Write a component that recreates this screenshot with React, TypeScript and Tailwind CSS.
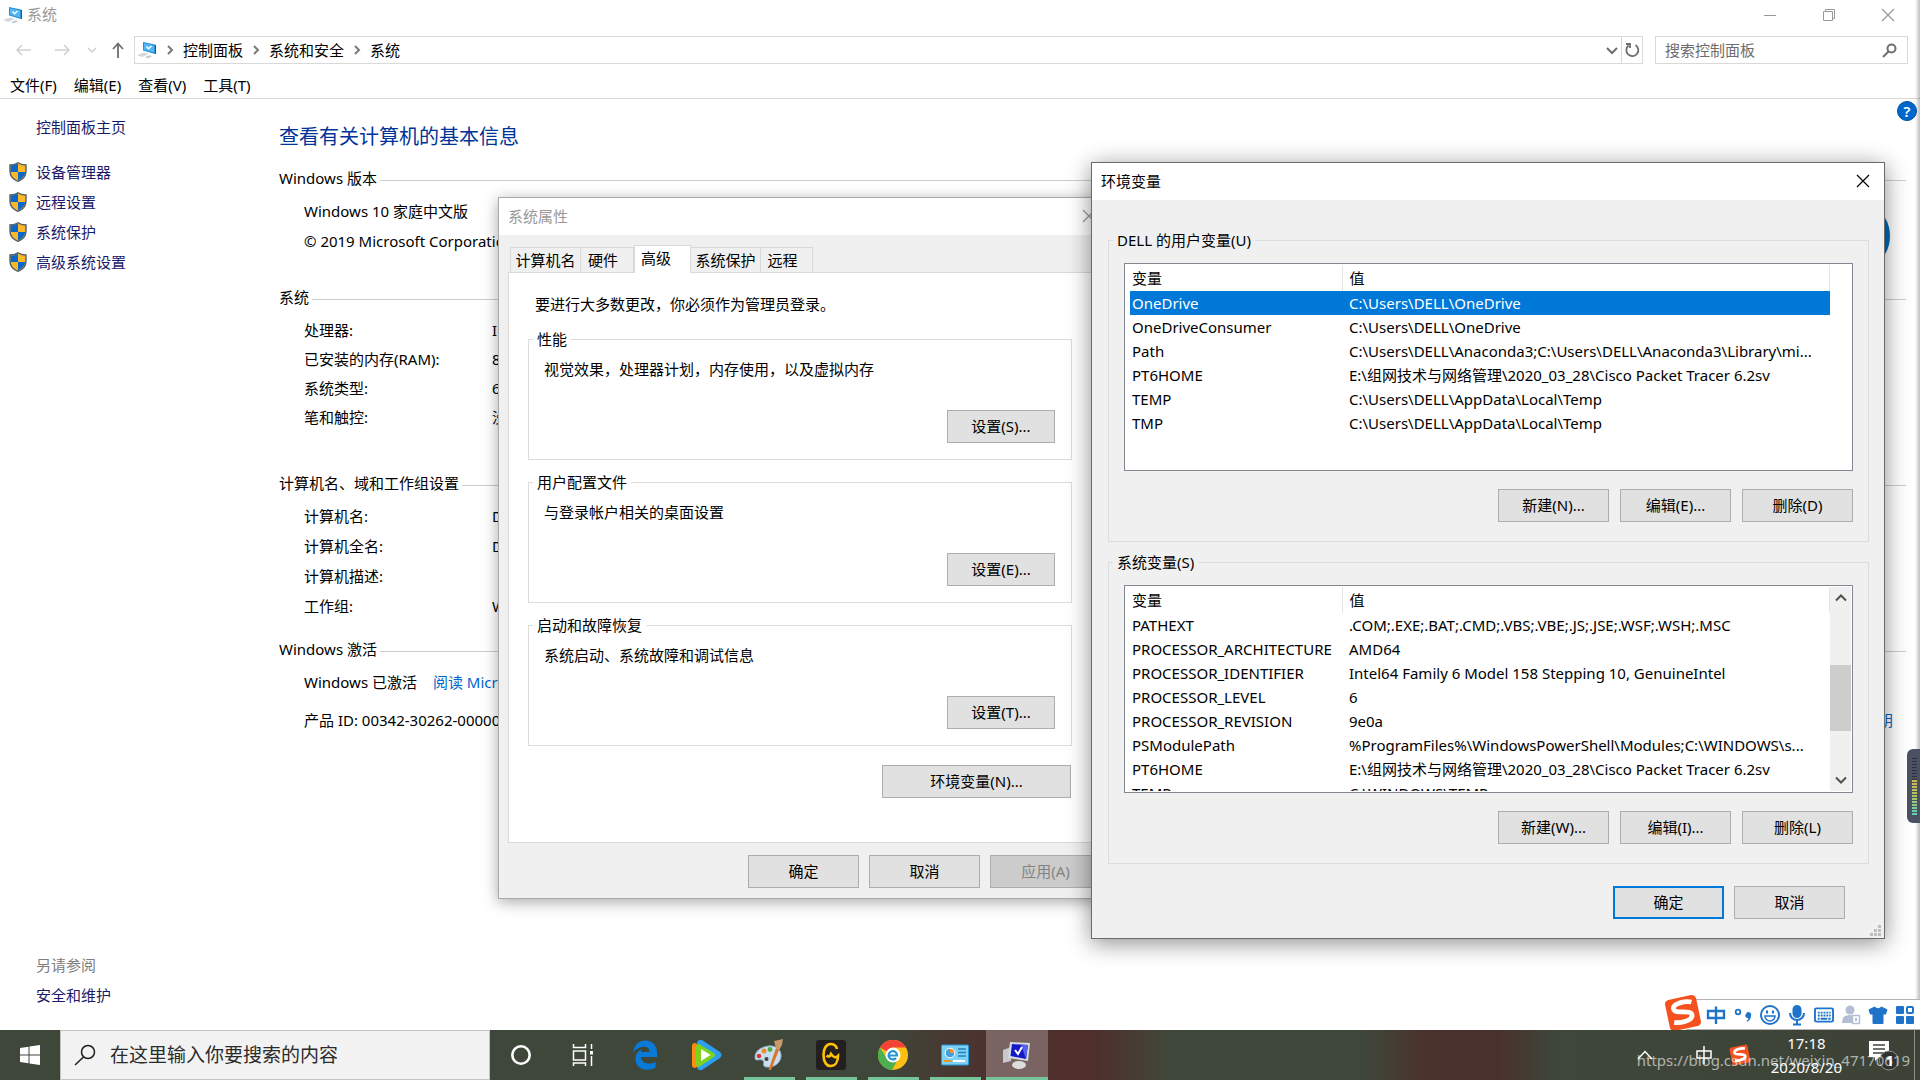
import { ReactNode } from "react";

interface IVariable {
  name: string;
  value: string;
}

interface IInfoRow {
  label: string;
  value: string;
}

const breadcrumbs = ["控制面板", "系统和安全", "系统"];
const menus = ["文件(F)", "编辑(E)", "查看(V)", "工具(T)"];
const sideLinks = ["设备管理器", "远程设置", "系统保护", "高级系统设置"];

const systemRows: IInfoRow[] = [
  { label: "处理器:", value: "Intel(R) Core(TM)" },
  { label: "已安装的内存(RAM):", value: "8.00 GB" },
  { label: "系统类型:", value: "64 位操作系统" },
  { label: "笔和触控:", value: "没有可用于此显示器的笔或触控输入" },
];

const computerRows: IInfoRow[] = [
  { label: "计算机名:", value: "DESKTOP" },
  { label: "计算机全名:", value: "DESKTOP" },
  { label: "计算机描述:", value: "" },
  { label: "工作组:", value: "WORKGROUP" },
];

const userVariables: IVariable[] = [
  { name: "OneDrive", value: "C:\\Users\\DELL\\OneDrive" },
  { name: "OneDriveConsumer", value: "C:\\Users\\DELL\\OneDrive" },
  {
    name: "Path",
    value: "C:\\Users\\DELL\\Anaconda3;C:\\Users\\DELL\\Anaconda3\\Library\\mi...",
  },
  {
    name: "PT6HOME",
    value: "E:\\组网技术与网络管理\\2020_03_28\\Cisco Packet Tracer 6.2sv",
  },
  { name: "TEMP", value: "C:\\Users\\DELL\\AppData\\Local\\Temp" },
  { name: "TMP", value: "C:\\Users\\DELL\\AppData\\Local\\Temp" },
];

const systemVariables: IVariable[] = [
  {
    name: "PATHEXT",
    value: ".COM;.EXE;.BAT;.CMD;.VBS;.VBE;.JS;.JSE;.WSF;.WSH;.MSC",
  },
  { name: "PROCESSOR_ARCHITECTURE", value: "AMD64" },
  {
    name: "PROCESSOR_IDENTIFIER",
    value: "Intel64 Family 6 Model 158 Stepping 10, GenuineIntel",
  },
  { name: "PROCESSOR_LEVEL", value: "6" },
  { name: "PROCESSOR_REVISION", value: "9e0a" },
  {
    name: "PSModulePath",
    value: "%ProgramFiles%\\WindowsPowerShell\\Modules;C:\\WINDOWS\\s...",
  },
  {
    name: "PT6HOME",
    value: "E:\\组网技术与网络管理\\2020_03_28\\Cisco Packet Tracer 6.2sv",
  },
  { name: "TEMP", value: "C:\\WINDOWS\\TEMP" },
];

const ComputerIcon = () => (
  <svg width="20" height="18" viewBox="0 0 20 18" className="shrink-0">
    <path d="M6 1 L18 3.5 V13 L6 9.5 Z" fill="#2b8fd6" />
    <path d="M7 2.3 L17 4.4 V11.5 L7 8.6 Z" fill="#4fb8f5" />
    <path d="M18 3.5 L19 4.3 V13 L18 13Z" fill="#47525c" />
    <path d="M9.5 5.5 L11.5 7.8 L14.5 5" stroke="#fff" strokeWidth="1.4" fill="none" />
    <path d="M0 14 L7 11.5 L12 13 L5 16 Z" fill="#d3d9de" />
    <path d="M8 16 L13 14.2 L15 15.2 L10.5 17.5 Z" fill="#c3cad0" />
  </svg>
);

const ShieldIcon = () => (
  <svg width="18" height="20" viewBox="0 0 18 20" className="shrink-0">
    <path
      d="M9 0.8 C11 2.4 14 3 17 3 V9 C17 14 13.5 17.5 9 19.3 C4.500 17.5 1 14 1 9 V3 C4 3 7 2.400 9 0.8Z"
      fill="#fdb827"
      stroke="#55606a"
      strokeWidth="1.4"
    />
    <path d="M9 1.6 V10 H1.7 V3.6 C4.500 3.5 7 2.9 9 1.600Z" fill="#0a66c8" />
    <path d="M9 10 H16.200 C15.700 14 12.700 16.800 9 18.500Z" fill="#0a66c8" />
  </svg>
);

const Chevron = ({ d, className }: { d: string; className?: string }) => (
  <svg width="12" height="12" viewBox="0 0 12 12" className={className}>
    <path d={d} fill="none" stroke="currentColor" strokeWidth="2" />
  </svg>
);

const CloseIcon = () => (
  <svg width="14" height="14" viewBox="0 0 14 14">
    <path d="M1 1 L13 13 M13 1 L1 13" stroke="currentColor" strokeWidth="1.2" />
  </svg>
);

const SogouIcon = ({ size }: { size: number }) => (
  <svg width={size} height={size} viewBox="0 0 36 36" className="shrink-0">
    <g transform="rotate(-12 18 18)">
      <rect x="3" y="3" width="30" height="30" rx="4" fill="#f4511e" />
      <path
        d="M28 9.500 C23 7 10 7 10 12.500 C10 18 26 16 26 21.500 C26 27 13 27 8 25"
        fill="none"
        stroke="#fff"
        strokeWidth="4.500"
      />
    </g>
  </svg>
);

const Button = ({
  children,
  className = "w-[111px]",
  primary = false,
  disabled = false,
}: {
  children: ReactNode;
  className?: string;
  primary?: boolean;
  disabled?: boolean;
}) => (
  <button
    type="button"
    disabled={disabled}
    className={`h-[33px] shrink-0 pb-[2px] leading-5 ${className} ${
      primary ? "border-2 border-[#0078d7]" : "border border-[#adadad]"
    } ${disabled ? "bg-[#cccccc] text-[#838383]" : "bg-[#e1e1e1]"}`}
  >
    {children}
  </button>
);

const SectionTitle = ({ children }: { children: ReactNode }) => (
  <h2 className="flex items-center gap-[3px] leading-5">
    {children}
    <span className="mt-1 h-px flex-1 bg-[#cccccc]" />
  </h2>
);

const InfoRows = ({ rows, className }: { rows: IInfoRow[]; className: string }) => (
  <dl className={`pl-[25px] ${className}`}>
    {rows.map((row) => (
      <div key={row.label} className="flex">
        <dt className="w-[188px] shrink-0">{row.label}</dt>
        <dd className="whitespace-nowrap">{row.value}</dd>
      </div>
    ))}
  </dl>
);

const SettingsGroup = ({
  title,
  text,
  button,
}: {
  title: string;
  text: string;
  button: string;
}) => (
  <fieldset className="border border-[#dcdcdc] px-1 pb-4">
    <legend className="px-1 leading-5">{title}</legend>
    <p className="mt-[10px] pl-[11px] leading-5">{text}</p>
    <div className="mt-[31px] flex justify-end pr-3">
      <Button className="w-[108px]">{button}</Button>
    </div>
  </fieldset>
);

const VariableGroup = ({
  title,
  variables,
  buttons,
  selected,
  scrollable = false,
}: {
  title: string;
  variables: IVariable[];
  buttons: string[];
  selected?: string;
  scrollable?: boolean;
}) => (
  <fieldset className="border border-[#dcdcdc] px-1 pb-[19px]">
    <legend className="px-1 leading-5">{title}</legend>
    <div className="mt-[13px] px-[11px]">
      <div className="flex h-[208px] border border-[#828790] bg-white p-px">
        <div className="flex-1 overflow-hidden pl-1">
          <table className="w-full table-fixed border-collapse text-left">
            <thead>
              <tr className="h-[26px]">
                <th className="w-[212px] border-r border-[#e5e5e5] pl-[2px] font-normal">
                  变量
                </th>
                <th className="border-r border-[#e5e5e5] pl-[7px] font-normal">值</th>
              </tr>
            </thead>
            <tbody>
              {variables.map((item) => (
                <tr
                  key={item.name}
                  className={`h-6 leading-5 whitespace-nowrap ${
                    item.name === selected && "bg-[#0078d7] text-white"
                  }`}
                >
                  <td className="pl-[2px]">{item.name}</td>
                  <td className="pl-[7px]">{item.value}</td>
                </tr>
              ))}
            </tbody>
          </table>
        </div>
        {scrollable ? (
          <div className="flex w-[21px] flex-col items-center bg-[#f0f0f0] py-[5px] text-[#505050]">
            <Chevron d="M1 8.500 L6 3.500 L11 8.500" />
            <div className="mt-[61px] mb-auto h-[66px] w-full bg-[#cdcdcd]" />
            <Chevron d="M1 3.500 L6 8.500 L11 3.500" />
          </div>
        ) : (
          <div className="w-[21px]" />
        )}
      </div>
      <div className="mt-[18px] flex justify-end gap-[11px]">
        {buttons.map((label) => (
          <Button key={label}>{label}</Button>
        ))}
      </div>
    </div>
  </fieldset>
);

const SystemProperties = () => (
  <section className="absolute top-[197px] left-[498px] w-[613px] border border-[#aaaaaa] bg-[#f0f0f0] shadow-[0_3px_14px_rgba(0,0,0,0.35)]">
    <header className="flex h-[37px] items-center justify-between bg-white pr-[14px] pb-px pl-[9px] text-[#999999]">
      <h2>系统属性</h2>
      <button type="button" aria-label="关闭">
        <CloseIcon />
      </button>
    </header>
    <div className="px-[9px] py-[10px]">
      <div role="tablist" className="flex h-[27px] items-end pl-[2px] leading-5">
        <button role="tab" className="h-[25px] w-[71px] border border-b-0 border-[#d9d9d9]">
          计算机名
        </button>
        <button role="tab" className="h-[25px] w-[53px] border border-b-0 border-l-0 border-[#d9d9d9] pr-2">
          硬件
        </button>
        <button
          role="tab"
          aria-selected
          className="relative -mb-px h-7 w-[57px] border border-b-0 border-[#d9d9d9] bg-white pr-[13px] pb-1"
        >
          高级
        </button>
        <button role="tab" className="h-[25px] w-[70px] border border-b-0 border-l-0 border-[#d9d9d9]">
          系统保护
        </button>
        <button role="tab" className="h-[25px] w-[52px] border border-b-0 border-l-0 border-[#d9d9d9] pr-2">
          远程
        </button>
      </div>
      <div className="border border-[#d9d9d9] bg-white pt-[21px] pr-[28px] pb-11 pl-[19px]">
        <p className="mb-[15px] pl-[7px] leading-5">要进行大多数更改，你必须作为管理员登录。</p>
        <div className="flex flex-col gap-3">
          <SettingsGroup
            title="性能"
            text="视觉效果，处理器计划，内存使用，以及虚拟内存"
            button="设置(S)..."
          />
          <SettingsGroup title="用户配置文件" text="与登录帐户相关的桌面设置" button="设置(E)..." />
          <SettingsGroup
            title="启动和故障恢复"
            text="系统启动、系统故障和调试信息"
            button="设置(T)..."
          />
        </div>
        <div className="mt-[19px] flex justify-end pr-px">
          <Button className="w-[189px]">环境变量(N)...</Button>
        </div>
      </div>
      <div className="mt-3 flex justify-end gap-[10px]">
        <Button>确定</Button>
        <Button>取消</Button>
        <Button disabled>应用(A)</Button>
      </div>
    </div>
  </section>
);

const EnvironmentVariables = () => (
  <section className="absolute top-[162px] left-[1091px] w-[794px] border border-[#6b6b6b] bg-[#f0f0f0] shadow-[0_4px_22px_rgba(0,0,0,0.45)]">
    <header className="flex h-[37px] items-center justify-between bg-white pr-[14px] pb-px pl-[9px]">
      <h2>环境变量</h2>
      <button type="button" aria-label="关闭">
        <CloseIcon />
      </button>
    </header>
    <div className="flex flex-col gap-[10px] pt-[30px] pr-[15px] pl-4">
      <VariableGroup
        title="DELL 的用户变量(U)"
        variables={userVariables}
        buttons={["新建(N)...", "编辑(E)...", "删除(D)"]}
        selected="OneDrive"
      />
      <VariableGroup
        title="系统变量(S)"
        variables={systemVariables}
        buttons={["新建(W)...", "编辑(I)...", "删除(L)"]}
        scrollable
      />
    </div>
    <div className="mt-[22px] flex justify-end gap-[10px] pr-[39px] pb-[19px]">
      <Button primary>确定</Button>
      <Button>取消</Button>
    </div>
    <svg width="12" height="12" viewBox="0 0 12 12" className="absolute right-[2px] bottom-px">
      <path
        d="M8 0h3v3h-3z M4 4h3v3h-3z M8 4h3v3h-3z M0 8h3v3h-3z M4 8h3v3h-3z M8 8h3v3h-3z"
        fill="#bfbfbf"
      />
    </svg>
  </section>
);

const Explorer = () => (
  <>
    <header className="flex h-[30px] items-center pb-px pl-[3px] text-[#999999]">
      <ComputerIcon />
      <h1 className="pl-1">系统</h1>
      <div className="ml-auto flex items-center gap-[45px] pr-[25px]">
        <button type="button" aria-label="最小化">
          <svg width="14" height="14" viewBox="0 0 14 14">
            <path d="M1 7.500 H13" stroke="currentColor" />
          </svg>
        </button>
        <button type="button" aria-label="还原">
          <svg width="14" height="14" viewBox="0 0 14 14" fill="none" stroke="currentColor">
            <path d="M1.500 3.500 H10.500 V12.500 H1.500 Z M3.500 3.500 V1.500 H12.500 V10.500 H10.500" />
          </svg>
        </button>
        <button type="button" aria-label="关闭">
          <CloseIcon />
        </button>
      </div>
    </header>
    <nav className="flex h-10 items-center pr-3 pl-4">
      <div className="flex w-[118px] items-center text-[#d0d0d0]">
        <svg width="16" height="12" viewBox="0 0 16 12" fill="none" stroke="currentColor" strokeWidth="1.5">
          <path d="M6 1 L1 6 L6 11 M1 6 H15" />
        </svg>
        <svg width="16" height="12" viewBox="0 0 16 12" fill="none" stroke="currentColor" strokeWidth="1.5" className="ml-[22px]">
          <path d="M10 1 L15 6 L10 11 M15 6 H1" />
        </svg>
        <svg width="10" height="8" viewBox="0 0 10 8" fill="none" stroke="currentColor" strokeWidth="1.5" className="ml-[17px]">
          <path d="M1 2 L5 6 L9 2" />
        </svg>
        <svg width="14" height="16" viewBox="0 0 14 16" fill="none" stroke="#6e6e6e" strokeWidth="1.800" className="ml-[14px]">
          <path d="M2 7 L7 1.500 L12 7 M7 1.500 V16" />
        </svg>
      </div>
      <div className="flex h-7 flex-1 items-center border border-[#d9d9d9] pl-[2px]">
        <ComputerIcon />
        {breadcrumbs.map((crumb) => (
          <span key={crumb} className="flex items-center">
            <Chevron d="M4 2 L8 6 L4 10" className="mx-[7px] text-[#7a7a7a]" />
            <a href="#">{crumb}</a>
          </span>
        ))}
        <Chevron d="M1 4 L6 9 L11 4" className="mr-[3px] ml-auto text-[#6e6e6e]" />
        <button
          type="button"
          aria-label="刷新"
          className="flex h-full w-[21px] items-center justify-center border-l border-[#d9d9d9] text-[#6e6e6e]"
        >
          <svg width="15" height="16" viewBox="0 0 15 16" fill="none" stroke="currentColor" strokeWidth="1.800">
            <path d="M10.500 3 A6 6 0 1 1 3.500 3.500 M1 2 H5 V6" />
          </svg>
        </button>
      </div>
      <label className="ml-3 flex h-7 w-[253px] items-center border border-[#d9d9d9] pr-[10px] pl-[9px]">
        <input
          type="text"
          aria-label="搜索控制面板"
          placeholder="搜索控制面板"
          className="min-w-0 flex-1 outline-none placeholder:text-[#6d6d6d]"
        />
        <svg width="15" height="15" viewBox="0 0 15 15" fill="none" stroke="#6e6e6e" strokeWidth="2">
          <circle cx="9.500" cy="5.500" r="4" />
          <path d="M6.500 8.500 L1 14" />
        </svg>
      </label>
    </nav>
    <div className="flex h-[29px] items-center gap-[17px] border-b border-[#d9d9d9] pt-px pl-[10px]">
      {menus.map((menu) => (
        <button key={menu} type="button" className="leading-5">
          {menu}
        </button>
      ))}
    </div>
    <div className="flex min-h-0 flex-1">
      <aside className="flex w-[279px] shrink-0 flex-col pt-[18px] pb-[25px] pl-9 leading-5 text-[#1a1a68]">
        <a href="#">控制面板主页</a>
        <ul className="mt-5 -ml-[27px]">
          {sideLinks.map((link) => (
            <li key={link}>
              <a href="#" className="flex h-[30px] items-center gap-[9px]">
                <ShieldIcon />
                {link}
              </a>
            </li>
          ))}
        </ul>
        <p className="mt-auto text-[#808080]">另请参阅</p>
        <a href="#" className="mt-[10px]">
          安全和维护
        </a>
      </aside>
      <main className="relative min-w-0 flex-1 pt-6 pr-[14px]">
        <h1 className="mb-[17px] text-[20px] leading-7 text-[#003399]">查看有关计算机的基本信息</h1>
        <SectionTitle>Windows 版本</SectionTitle>
        <div className="mt-2 pl-[25px] leading-[30px]">
          <p>Windows 10 家庭中文版</p>
          <p>© 2019 Microsoft Corporation。保留所有权利。</p>
        </div>
        <div className="mt-[31px]">
          <SectionTitle>系统</SectionTitle>
          <InfoRows rows={systemRows} className="mt-[9px] leading-[29px]" />
        </div>
        <div className="mt-[41px]">
          <SectionTitle>计算机名、域和工作组设置</SectionTitle>
          <InfoRows rows={computerRows} className="mt-2 leading-[30px]" />
        </div>
        <div className="mt-[18px]">
          <SectionTitle>Windows 激活</SectionTitle>
          <div className="mt-[13px] flex gap-4 pl-[25px] leading-5">
            <span>Windows 已激活</span>
            <a href="#" className="text-[#0066cc]">
              阅读 Microsoft 软件许可条款
            </a>
          </div>
          <div className="mt-[18px] flex justify-between pr-[13px] pl-[25px] leading-5">
            <span>产品 ID: 00342-30262-00000-AAOEM</span>
            <a href="#" className="text-[#0066cc]">
              更改产品密钥
            </a>
          </div>
        </div>
        <div className="absolute top-[112px] right-[30px] h-[50px] w-8 rounded-[50%] border-[6px] border-[#006db8]" />
        <button
          type="button"
          aria-label="帮助"
          className="absolute top-[2px] right-[3px] h-5 w-5 rounded-full border border-[#004e9c] bg-[#0067cc] leading-4 font-semibold text-white"
        >
          ?
        </button>
      </main>
    </div>
  </>
);

// Floating input method toolbar
const ImeBar = () => (
  <div className="absolute right-0 bottom-0 flex h-[31px] items-center text-[#1f74c9]">
    <div className="z-10 -mt-1">
      <SogouIcon size={38} />
    </div>
    <div className="-ml-4 flex h-[31px] items-center gap-[7px] border-y border-[#b4b4b4] bg-white pt-px pr-[5px] pl-5">
      <svg width="20" height="20" viewBox="0 0 20 20" fill="none" stroke="currentColor" strokeWidth="2.400">
        <path d="M2 6 H18 V13 H2 Z M10 1.500 V19" />
      </svg>
      <svg width="20" height="20" viewBox="0 0 20 20">
        <circle cx="5" cy="7" r="2.300" fill="none" stroke="currentColor" strokeWidth="1.800" />
        <path d="M13 9 a2.600 2.600 0 0 1 5 1.500 c0 3-1.500 5-4 6.500 l-.5-1 c1.500-1 1.800-2 1.800-3 a2.400 2.400 0 0 1-2.300-4z" fill="currentColor" />
      </svg>
      <svg width="20" height="20" viewBox="1 1 20 20" fill="none" stroke="currentColor" strokeWidth="2">
        <circle cx="11" cy="11" r="9" />
        <path d="M6 12 a5 5 0 0 0 10 0z" strokeWidth="1.500" />
        <path d="M8 6.500 V9.500 M14 6.500 V9.500" />
      </svg>
      <svg width="20" height="22" viewBox="0 0 20 22" fill="none" stroke="currentColor" strokeWidth="2">
        <rect x="6.500" y="2" width="7" height="11" rx="3.500" fill="currentColor" />
        <path d="M3 9 a7 7 0 0 0 14 0 M10 16 V20 M6 20.500 H14" />
      </svg>
      <svg width="20" height="20" viewBox="0 0 21 20">
        <rect x="1" y="3" width="19" height="14" rx="1.500" fill="none" stroke="currentColor" strokeWidth="2" />
        <path d="M4 7.500 H17.500 M4 10.500 H17.500" stroke="currentColor" strokeWidth="2" strokeDasharray="2 1" />
        <path d="M4 14 H6 M7 14 H14 M15 14 H17.500" stroke="currentColor" strokeWidth="2" />
      </svg>
      <svg width="20" height="20" viewBox="0 0 20 20" fill="#b4bfd6">
        <circle cx="9" cy="5" r="4.500" />
        <path d="M1 18 c0-6 3-8 8-8 s8 2 8 8z" />
        <path d="M11.500 10.500 H18.500 V18.500 H11.500 Z" fill="#fff" stroke="#b4bfd6" strokeWidth="1.500" />
        <path d="M14 13 h2 v3 h-2z" />
      </svg>
      <svg width="20" height="20" viewBox="0 0 20 20" fill="currentColor">
        <path d="M6.500 1.500 Q10 5 13.500 1.500 L19.500 4.500 L18 9.500 H15.500 V18 Q15.500 19 14.500 19 H5.500 Q4.500 19 4.500 18 V9.500 H2 L0.500 4.500 Z" />
      </svg>
      <svg width="20" height="20" viewBox="0 0 20 20" fill="currentColor">
        <rect x="1" y="1" width="8" height="8" rx="1" />
        <rect x="12" y="2" width="6" height="6" rx="1" fill="none" stroke="currentColor" strokeWidth="2" />
        <rect x="1" y="11" width="8" height="8" rx="1" />
        <rect x="11" y="11" width="8" height="8" rx="1" />
      </svg>
    </div>
  </div>
);

const TaskButton = ({
  label,
  open = false,
  active = false,
  children,
}: {
  label: string;
  open?: boolean;
  active?: boolean;
  children: ReactNode;
}) => (
  <button
    type="button"
    aria-label={label}
    className={`flex h-full w-[62px] items-center justify-center border-b-[3px] pt-[2px] ${
      active ? "border-[#76c49a] bg-white/25" : "border-transparent"
    } ${open && "relative"}`}
  >
    {children}
    {open && <span className="absolute -bottom-[3px] left-[6px] h-[3px] w-[51px] bg-[#76c49a]" />}
  </button>
);

const Taskbar = () => (
  <footer className="relative flex h-[50px] shrink-0 items-center bg-[linear-gradient(90deg,#3f463a_0%,#3f463a_46%,#4e302d_52%,#4e2f2c_57%,#40483b_61%,#3f473a_71%,#4a332d_74%,#49322d_78%,#3f463a_81%,#3c4336_100%)]">
    <button type="button" aria-label="开始" className="flex w-[60px] justify-center">
      <svg width="20" height="20" viewBox="0 0 20 20" fill="#fff">
        <path d="M0 3 L8.500 1.700 V9.500 H0Z M9.500 1.500 L20 0 V9.500 H9.500Z M0 10.500 H8.500 V18.300 L0 17Z M9.500 10.500 H20 V20 L9.500 18.500Z" />
      </svg>
    </button>
    <label className="flex h-full w-[430px] items-center border border-[#c3c3c3] bg-[#f2f2f2] pl-[13px]">
      <svg width="22" height="22" viewBox="0 0 22 22" fill="none" stroke="#1f1f1f" strokeWidth="1.500">
        <circle cx="14" cy="8" r="6.500" />
        <path d="M9.500 13 L1 21" />
      </svg>
      <input
        type="text"
        aria-label="搜索"
        placeholder="在这里输入你要搜索的内容"
        className="ml-[14px] flex-1 text-[19px] outline-none placeholder:text-[#2b2b2b]"
      />
    </label>
    <TaskButton label="Cortana">
      <svg width="22" height="22" viewBox="0 0 22 22" fill="none" stroke="#fff" strokeWidth="2.600">
        <circle cx="11" cy="11" r="8.700" />
      </svg>
    </TaskButton>
    <TaskButton label="任务视图">
      <svg width="22" height="22" viewBox="0 0 22 22" fill="none" stroke="#fff" strokeWidth="1.500">
        <path d="M1.500 7 H13.500 V16 H1.500Z M1.500 0 V3.500 H13.500 V0 M1.500 22 V19 H13.500 V22 M19.500 0 V5 M19.500 12 V22" />
        <path d="M18 7 H21 V10.500 H18Z" fill="#fff" stroke="none" />
      </svg>
    </TaskButton>
    <TaskButton label="Microsoft Edge">
      <svg width="26" height="30" viewBox="0 0 26 30" fill="#0a7ad8">
        <path d="M1 13 C2 5 7 0.500 13.500 0.500 C21 0.500 25 6 25 13 V17 H9 C9.300 21.500 13 23.500 17 23.500 C19.500 23.500 22 22.700 23.500 21.700 V27.500 C21 29 18 29.700 15 29.700 C8 29.700 3.500 25.500 3.500 19 C3.500 14.500 6 11 10 9 C9.300 10 9 11 9 12 H17.500 C17.500 8.500 15.500 6.800 12 6.800 C7.500 6.800 3 9.500 1 13Z" />
      </svg>
    </TaskButton>
    <TaskButton label="腾讯视频">
      <svg width="30" height="32" viewBox="0 0 30 32">
        <path d="M5 3 Q7 0 10 1 L28 13 Q31 16 28 19 L10 31 Q7 32 5 29Z" fill="#2d9ff2" />
        <path d="M0 7 Q0 4 3 4 L12 9 V24 L3 29 Q0 29 0 26Z" fill="#ff8d12" />
        <path d="M4 7 L7 5 L22 14 Q24 16 22 18 L7 28 L4 26Z" fill="#7ed321" />
        <path d="M9 10 L18.500 16 L9 22Z" fill="#fff" />
      </svg>
    </TaskButton>
    <TaskButton label="画图" open>
      <svg width="30" height="32" viewBox="0 0 30 32">
        <path d="M14 7 C22 6 28 11 27 18 C26 25 19 29 12 28 C7 27.500 12 22 8 21 C4 20 1 23 1 18 C1 12 7 8 14 7Z" fill="#c9dff0" stroke="#88a9c4" />
        <circle cx="5" cy="17" r="2.300" fill="#d9362f" />
        <circle cx="10" cy="12" r="2.500" fill="#f08b32" />
        <circle cx="16" cy="10.500" r="2.400" fill="#51ad43" />
        <circle cx="12.500" cy="20" r="2" fill="#3f463a" />
        <path d="M22 9 L25 11 L17 31 L14.500 31 Z" fill="#d8772b" />
        <path d="M20 2 L25 1 L29 0 L28 6 L25 11 L22 9Z" fill="#c99b6b" />
      </svg>
    </TaskButton>
    <TaskButton label="启动器" open>
      <svg width="30" height="30" viewBox="0 0 30 30">
        <rect width="30" height="30" rx="3" fill="#231f20" />
        <path d="M21 9 C20 5 17 4 14.500 4 C10 4 7.500 9 7.500 15 C7.500 21 10 26 14.500 26 C19 26 22 22 22 16 C20 18 18 18 15 14 C14 17 12 17 10.500 15.500" fill="none" stroke="#ffc107" strokeWidth="2.600" />
      </svg>
    </TaskButton>
    <TaskButton label="Chrome" open>
      <svg width="30" height="30" viewBox="0 0 30 30">
        <circle cx="15" cy="15" r="15" fill="#fbc013" />
        <path d="M15 15 L2 7.500 A15 15 0 0 1 28 7.500 H15Z" fill="#f44336" />
        <path d="M2 7.500 A15 15 0 0 0 14 30 L19.500 20 L15 15 L8.500 18Z" fill="#4caf50" />
        <circle cx="15" cy="15" r="7.500" fill="#fff" />
        <path d="M11 15.500 H19 A4.200 4.200 0 1 0 18 18" fill="none" stroke="#2196d3" strokeWidth="2.200" />
      </svg>
    </TaskButton>
    <TaskButton label="控制面板" open>
      <svg width="28" height="22" viewBox="0 0 28 22">
        <rect x="0.500" y="1" width="27" height="20" rx="1" fill="#7dd1f5" stroke="#2597d4" />
        <circle cx="9" cy="9" r="4.800" fill="#3f9fe0" />
        <path d="M9 9 V4.200 A4.800 4.800 0 0 1 13.800 9Z" fill="#f0932b" />
        <circle cx="9" cy="9" r="4.800" fill="none" stroke="#fff" />
        <path d="M17 5 H25 M17 8.500 H25 M17 12 H25" stroke="#2382b8" strokeWidth="1.600" />
        <path d="M3 17 H11" stroke="#f0932b" strokeWidth="2" />
        <path d="M12 17 H24" stroke="#fff" strokeWidth="2" />
      </svg>
    </TaskButton>
    <TaskButton label="系统" active>
      <svg width="30" height="30" viewBox="0 0 30 30">
        <path d="M1 10 L9 7 V21 L1 23Z" fill="#c6c9cd" />
        <path d="M8 2 L28 3 L26 21 L6 18Z" fill="#d7dadf" />
        <path d="M10 4 L26 5 L24 19 L8.500 16Z" fill="#1418c8" />
        <path d="M19 4.600 L26 5 L24 19Z" fill="#5663e8" />
        <path d="M13 10 L16 14 L20 7" fill="none" stroke="#fff" strokeWidth="2" />
        <ellipse cx="17" cy="25" rx="7" ry="4" fill="#dcdcdc" />
      </svg>
    </TaskButton>
    <div className="ml-auto flex h-full items-center text-white">
      <svg width="16" height="10" viewBox="0 0 16 10" fill="none" stroke="#fff" strokeWidth="1.500" className="mr-[43px]">
        <path d="M1 9 L8 1.500 L15 9" />
      </svg>
      <svg width="16" height="18" viewBox="0 0 16 18" fill="none" stroke="#fff" strokeWidth="1.500" className="mr-[17px]">
        <path d="M1 5 H15 V12 H1Z M8 0 V18" />
      </svg>
      <SogouIcon size={22} />
      <div className="mr-[27px] ml-5 text-center leading-6">
        <div>17:18</div>
        <div>2020/8/20</div>
      </div>
      <button type="button" aria-label="通知" className="relative mr-[14px]">
        <svg width="31" height="32" viewBox="0 0 31 32">
          <path d="M0 2 H20 V18 H10 L6 22 V18 H0Z" fill="#fff" />
          <path d="M4 6 H16 M4 10 H16 M4 14 H16" stroke="#3f463a" strokeWidth="1.300" />
          <circle cx="20" cy="21.500" r="9.500" fill="#2f3330" stroke="#8b8f88" />
        </svg>
        <span className="absolute right-[6px] bottom-0 text-[15px] leading-[21px] font-bold">1</span>
      </button>
      <span className="mr-[5px] h-full w-px bg-[#8b8f88]" />
    </div>
    <p className="absolute right-[10px] bottom-[10px] leading-5 text-white/60">
      https://blog.csdn.net/weixin_47170619
    </p>
  </footer>
);

const App = () => {
  return (
    <div className="flex h-screen flex-col overflow-hidden bg-white font-['Noto_Sans','Noto_Sans_CJK_SC',sans-serif] text-[15px] text-black">
      <div className="relative flex min-h-0 flex-1 flex-col overflow-hidden">
        <Explorer />
        <SystemProperties />
        <EnvironmentVariables />
        <div className="absolute inset-y-0 right-0 w-[5px] bg-gradient-to-r from-transparent to-black/25" />
        <div className="absolute top-[749px] right-0 h-[74px] w-[13px] rounded-l-md bg-[#4b5063] py-[9px] pl-[5px]">
          <div className="h-[22px] w-[5px] bg-[repeating-linear-gradient(180deg,#2e3240_0,#2e3240_1px,#4b5063_1px,#4b5063_3px)]" />
          <div className="h-[35px] w-[5px] bg-[repeating-linear-gradient(180deg,transparent_0,transparent_2px,#4b5063_2px,#4b5063_3px),linear-gradient(180deg,#d9b84a,#a9c863,#5fd0b8)]" />
        </div>
        <ImeBar />
      </div>
      <Taskbar />
    </div>
  );
};

export default App;
